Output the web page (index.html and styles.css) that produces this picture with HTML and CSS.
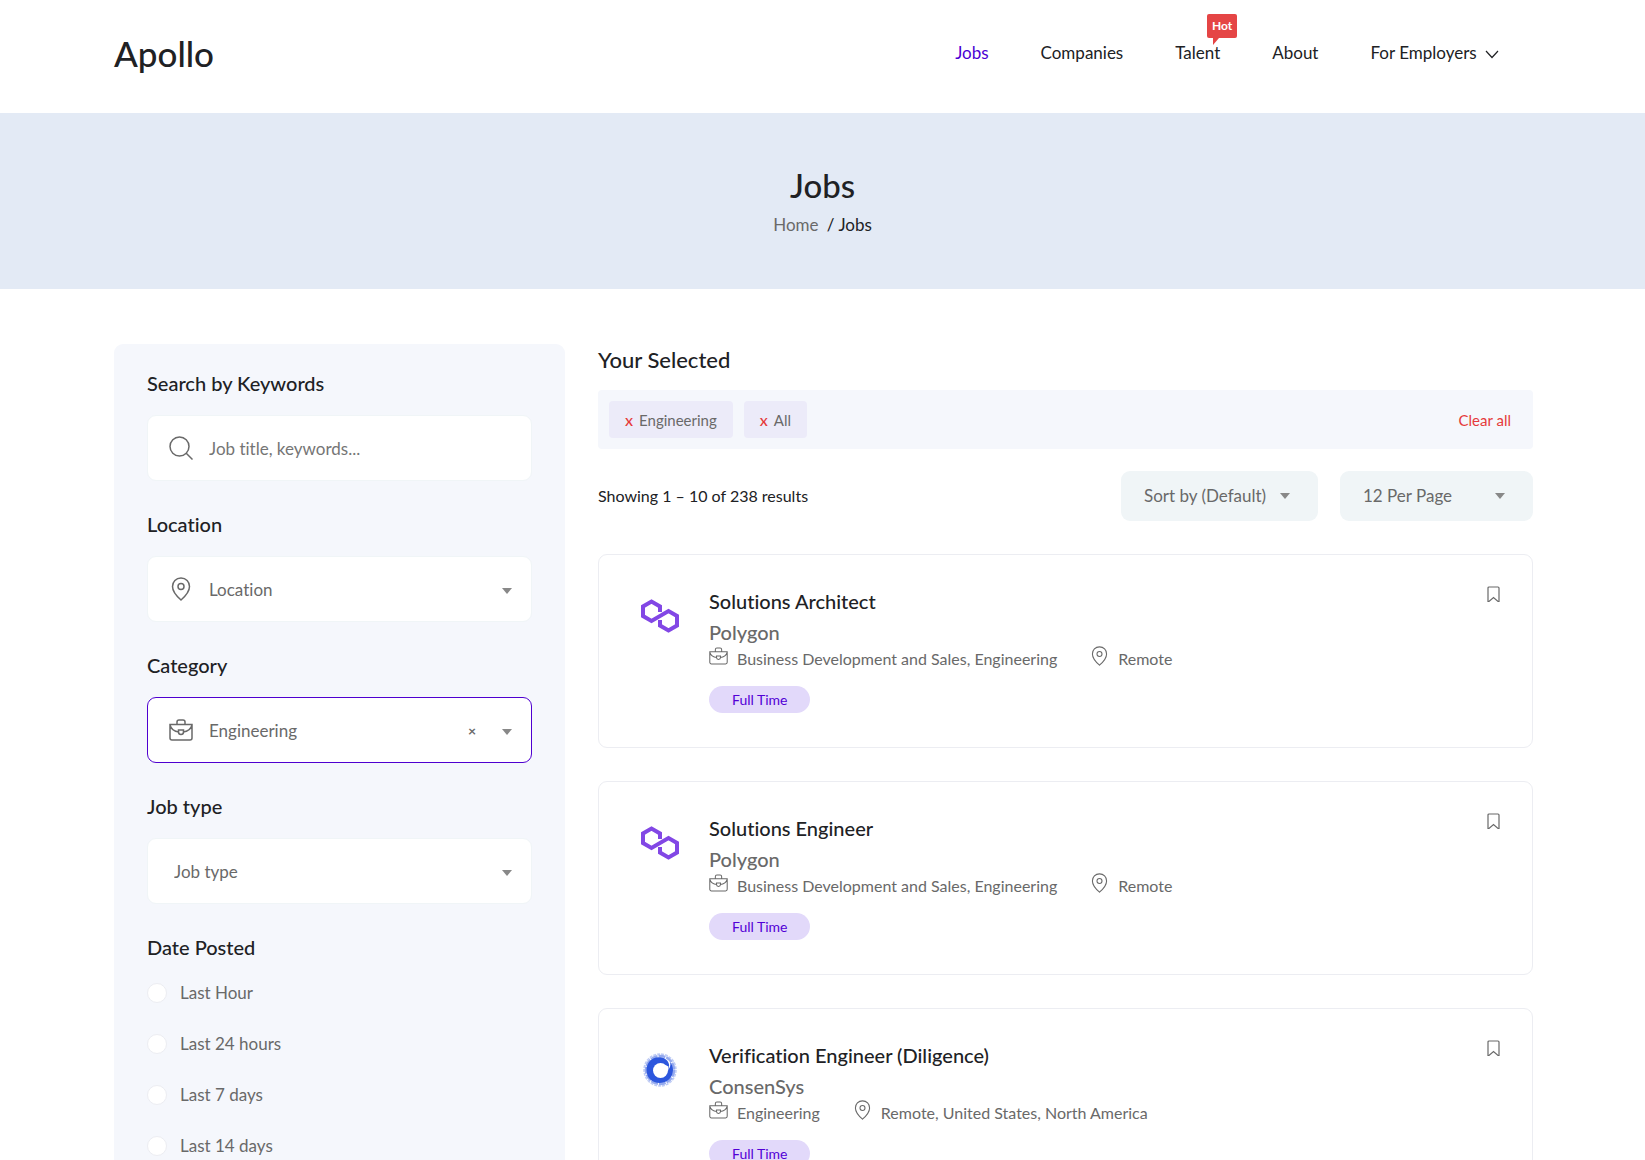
FILE: index.html
```html
<!DOCTYPE html>
<html lang="en">
<head>
    <meta charset="UTF-8">
    <meta name="viewport" content="width=device-width, initial-scale=1.0">
    <title>Jobs - Apollo</title>
    <link rel="stylesheet" href="styles.css">
</head>
<body>
    <!-- Shared icons -->
    <svg class="icon-defs" aria-hidden="true">
        <symbol id="icon-briefcase" viewBox="0 0 24 22">
            <path d="M1 5.500h22v13.500a2 2 0 0 1-2 2H3a2 2 0 0 1-2-2zM8 5.500V3a2 2 0 0 1 2-2h4a2 2 0 0 1 2 2v2.500M1 6c1 4 5 6.500 9 7M23 6c-1 4-5 6.500-9 7"/>
            <path d="M9.500 11h5v2a2.500 2.500 0 0 1-5 0z"/>
        </symbol>
        <symbol id="icon-pin" viewBox="0 0 20 24">
            <path d="M10 1c5 0 8.500 4 8.500 8.500C18.500 15 14 19.500 10 23 6 19.500 1.500 15 1.500 9.500 1.500 5 5 1 10 1z"/>
            <circle cx="10" cy="9.500" r="3"/>
        </symbol>
        <symbol id="icon-bookmark" viewBox="0 0 13 17">
            <path d="M2 1h9a1 1 0 0 1 1 1V15.500h-1l-4.500-4-4.500 4H1V2A1 1 0 0 1 2 1z"/>
        </symbol>
        <symbol id="logo-polygon" viewBox="0 0 38 34">
            <path d="M19 13V7.500L10.500 2.500 2 7.500V17l8.500 5 17-10 8.500 5v9.500l-8.500 5-8.500-5V21"/>
        </symbol>
    </svg>

    <header class="header">
        <div class="container header-inner">
            <a class="brand" href="#">Apollo</a>
            <nav class="nav">
                <a class="active" href="#">Jobs</a>
                <a href="#">Companies</a>
                <a class="talent" href="#">Talent<span class="hot">Hot</span></a>
                <a href="#">About</a>
                <a href="#">For Employers
                    <svg class="chevron" viewBox="0 0 14 9"><path d="M1 1l6 6.500L13 1"/></svg>
                </a>
            </nav>
        </div>
    </header>

    <section class="banner">
        <h1>Jobs</h1>
        <div class="breadcrumb"><a href="#">Home</a> <span>/ Jobs</span></div>
    </section>

    <main class="container content">
        <aside class="sidebar">
            <div class="filter">
                <label for="keywords">Search by Keywords</label>
                <div class="field">
                    <svg class="field-icon" viewBox="0 0 24 24"><circle cx="10.500" cy="10.500" r="9.500"/><path d="M17 17l6.500 6.500"/></svg>
                    <input type="text" id="keywords" placeholder="Job title, keywords...">
                </div>
            </div>
            <div class="filter">
                <label for="location">Location</label>
                <div class="field">
                    <svg class="field-icon"><use href="#icon-pin"/></svg>
                    <select id="location"><option>Location</option></select>
                    <span class="arrow"></span>
                </div>
            </div>
            <div class="filter">
                <label for="category">Category</label>
                <div class="field selected">
                    <svg class="field-icon"><use href="#icon-briefcase"/></svg>
                    <select id="category"><option>Engineering</option></select>
                    <button class="clear" type="button" aria-label="Clear category">×</button>
                    <span class="arrow"></span>
                </div>
            </div>
            <div class="filter">
                <label for="job-type">Job type</label>
                <div class="field no-icon">
                    <select id="job-type"><option>Job type</option></select>
                    <span class="arrow"></span>
                </div>
            </div>
            <fieldset class="dates">
                <legend>Date Posted</legend>
                <label><input type="radio" name="date"> Last Hour</label>
                <label><input type="radio" name="date"> Last 24 hours</label>
                <label><input type="radio" name="date"> Last 7 days</label>
                <label><input type="radio" name="date"> Last 14 days</label>
            </fieldset>
        </aside>

        <section class="results">
            <h2>Your Selected</h2>
            <div class="selection">
                <button class="chip" type="button"><span>x</span>Engineering</button>
                <button class="chip" type="button"><span>x</span>All</button>
                <a class="clear-all" href="#">Clear all</a>
            </div>

            <div class="toolbar">
                <p>Showing 1 – 10 of 238 results</p>
                <div class="sort">
                    <select aria-label="Sort by"><option>Sort by (Default)</option></select>
                    <span class="arrow"></span>
                </div>
                <div class="sort per-page">
                    <select aria-label="Jobs per page"><option>12 Per Page</option></select>
                    <span class="arrow"></span>
                </div>
            </div>

            <article class="job">
                <svg class="logo logo-polygon"><use href="#logo-polygon"/></svg>
                <div class="job-info">
                    <h3><a href="#">Solutions Architect</a></h3>
                    <h4>Polygon</h4>
                    <ul class="meta">
                        <li><svg class="meta-icon"><use href="#icon-briefcase"/></svg>Business Development and Sales, Engineering</li>
                        <li><svg class="meta-icon"><use href="#icon-pin"/></svg>Remote</li>
                    </ul>
                    <a class="type" href="#">Full Time</a>
                </div>
                <button class="bookmark" type="button" aria-label="Save job"><svg><use href="#icon-bookmark"/></svg></button>
            </article>

            <article class="job">
                <svg class="logo logo-polygon"><use href="#logo-polygon"/></svg>
                <div class="job-info">
                    <h3><a href="#">Solutions Engineer</a></h3>
                    <h4>Polygon</h4>
                    <ul class="meta">
                        <li><svg class="meta-icon"><use href="#icon-briefcase"/></svg>Business Development and Sales, Engineering</li>
                        <li><svg class="meta-icon"><use href="#icon-pin"/></svg>Remote</li>
                    </ul>
                    <a class="type" href="#">Full Time</a>
                </div>
                <button class="bookmark" type="button" aria-label="Save job"><svg><use href="#icon-bookmark"/></svg></button>
            </article>

            <article class="job">
                <svg class="logo logo-consensys" viewBox="0 0 38 38">
                    <circle class="halo" cx="19" cy="19" r="16"/>
                    <circle class="spray" cx="19" cy="19" r="14"/>
                    <path class="disc" d="M27 19c3-5 0-11-6-12.500C12 4.500 5.500 11 5.500 19c0 8 6 13 13 13 8 0 13.500-6 13.500-13 0-3-1-6-3-8 1 3 0 6-2 8z"/>
                    <circle class="hole" cx="19.500" cy="19.500" r="7.500"/>
                    <path class="hole" d="M24 14l3.500 1.500-.5 5z"/>
                </svg>
                <div class="job-info">
                    <h3><a href="#">Verification Engineer (Diligence)</a></h3>
                    <h4>ConsenSys</h4>
                    <ul class="meta">
                        <li><svg class="meta-icon"><use href="#icon-briefcase"/></svg>Engineering</li>
                        <li><svg class="meta-icon"><use href="#icon-pin"/></svg>Remote, United States, North America</li>
                    </ul>
                    <a class="type" href="#">Full Time</a>
                </div>
                <button class="bookmark" type="button" aria-label="Save job"><svg><use href="#icon-bookmark"/></svg></button>
            </article>
        </section>
    </main>
</body>
</html>
```
FILE: styles.css
```css
* {
    box-sizing: border-box;
}

body {
    margin: 0;
    font-family: Lato, 'Liberation Sans', sans-serif;
    font-size: 17px;
    line-height: 26px;
    font-variant-ligatures: none;
    color: #696969;
    background-color: #fff;
    height: 100vh;
    overflow-x: hidden;
    scrollbar-width: none;
}

h1, h2, h3, h4, p, ul {
    margin: 0;
    padding: 0;
    font-weight: 500;
}

a {
    color: inherit;
    text-decoration: none;
}

svg {
    fill: none;
    stroke: currentColor;
    stroke-width: 1.5;
}

button, input, select {
    font: inherit;
    color: inherit;
}

button {
    padding: 0;
    border: none;
    background: none;
    cursor: pointer;
}

.icon-defs {
    position: absolute;
    width: 0;
    height: 0;
}

.container {
    padding: 0 112px 0 114px;
}

/* Header */
.header-inner {
    display: flex;
    align-items: center;
    justify-content: space-between;
    height: 113px;
    padding-bottom: 8px;
    color: #202124;
}

.brand {
    font-size: 35px;
    font-weight: 500;
    line-height: 40px;
}

.nav {
    display: flex;
    gap: 52px;
    margin-right: 34px;
}

.nav .active {
    color: #4a00d4;
}

.talent {
    position: relative;
}

.hot {
    position: absolute;
    top: -26px;
    right: -17px;
    padding: 0 5px;
    border-radius: 2px;
    font-size: 12px;
    font-weight: 700;
    line-height: 24px;
    color: #fff;
    background-color: #e54545;
}

.hot::after {
    content: "";
    position: absolute;
    top: 24px;
    left: 6px;
    border-top: 7px solid #e54545;
    border-right: 6px solid transparent;
}

.chevron {
    width: 14px;
    height: 9px;
    margin-left: 4px;
    stroke-width: 1.2;
}

/* Page title */
.banner {
    padding: 50px 0 46px;
    text-align: center;
    color: #202124;
    background-color: #e3eaf5;
}

.banner h1 {
    font-size: 33px;
    line-height: 44px;
}

.breadcrumb {
    line-height: 36px;
}

.breadcrumb a {
    margin-right: 4px;
    color: #696969;
}

.content {
    display: grid;
    grid-template-columns: 451fr 935fr;
    gap: 33px;
    padding-top: 55px;
}

/* Filters */
.sidebar {
    padding: 26px 33px;
    border-radius: 9px;
    background-color: #f5f7fc;
}

.filter {
    margin-bottom: 30px;
}

.filter > label, .dates legend {
    display: block;
    margin-bottom: 19px;
    padding: 0;
    font-size: 20px;
    font-weight: 500;
    color: #202124;
}

.field {
    display: flex;
    align-items: center;
    height: 66px;
    padding: 0 19px 0 21px;
    border: 1px solid #f0f5f7;
    border-radius: 9px;
    background-color: #fff;
}

.field.selected {
    border-color: #4f00d0;
}

.field.no-icon {
    padding-left: 26px;
}

.field-icon {
    flex: none;
    width: 24px;
    height: 24px;
    margin-right: 16px;
}

.field input, .field select {
    flex: 1;
    min-width: 0;
    padding: 2px 0 0;
    border: none;
    outline: none;
    background: none;
    appearance: none;
}

.field input::placeholder {
    color: #757575;
    opacity: 1;
}

.arrow {
    border-top: 6px solid #888;
    border-left: 5px solid transparent;
    border-right: 5px solid transparent;
}

.field .arrow {
    margin-top: 4px;
}

.clear {
    margin: 2px 26px 0 0;
    font-size: 14px;
    font-weight: 700;
}

.dates {
    margin: 0;
    padding: 0;
    border: none;
}

.dates legend {
    margin-bottom: 20px;
}

.dates label {
    display: flex;
    align-items: center;
    gap: 13px;
    margin-bottom: 25px;
}

.dates input {
    width: 20px;
    height: 20px;
    margin: 0;
    border: 1px solid #ecedf2;
    border-radius: 50%;
    background-color: #fff;
    appearance: none;
}

/* Results */
.results h2 {
    margin: 3px 0 17px;
    font-size: 22px;
    color: #202124;
}

.selection {
    display: flex;
    align-items: center;
    gap: 11px;
    padding: 11px 22px 11px 11px;
    border-radius: 4px;
    font-size: 15px;
    background-color: #f5f7fc;
}

.chip {
    height: 37px;
    padding: 0 16px;
    border-radius: 4px;
    background-color: #ecebf9;
}

.chip span {
    margin-right: 6px;
    font-size: 16px;
    font-weight: 500;
    color: #e53a3a;
}

.clear-all {
    margin-left: auto;
    color: #e53a3a;
}

.toolbar {
    display: flex;
    align-items: center;
    gap: 22px;
    margin: 22px 0 33px;
}

.toolbar p {
    flex: 1;
    font-size: 16px;
    font-weight: 400;
    color: #202124;
}

.sort {
    display: flex;
    align-items: center;
    width: 197px;
    height: 50px;
    padding: 0 28px 0 23px;
    border-radius: 9px;
    background-color: #f0f5f7;
}

.per-page {
    width: 193px;
}

.sort select {
    flex: 1;
    min-width: 0;
    padding: 0;
    border: none;
    background: none;
    appearance: none;
}

.job {
    display: flex;
    align-items: flex-start;
    margin-bottom: 33px;
    padding: 32px 33px 34px;
    border: 1px solid #ecedf2;
    border-radius: 9px;
}

.logo {
    flex: none;
    width: 38px;
    height: 34px;
    margin: 12px 30px 0 9px;
}

.logo-polygon {
    color: #8247e5;
    stroke-width: 4;
}

.logo-consensys {
    height: 38px;
    margin-top: 10px;
    color: #2c56dd;
}

.halo {
    stroke-width: 1.5;
    stroke-dasharray: 3 1;
    opacity: 0.3;
}

.spray {
    stroke-width: 2.5;
    stroke-dasharray: 7 1;
    opacity: 0.5;
}

.disc {
    fill: #2c56dd;
    stroke: none;
}

.hole {
    fill: #fff;
    stroke: none;
}

.job-info {
    flex: 1;
}

.job h3, .job h4 {
    font-size: 20px;
}

.job h3 {
    line-height: 28px;
    color: #202124;
}

.job h4 {
    line-height: 34px;
}

.meta {
    display: flex;
    gap: 33px;
    margin: -3px 0 16px;
    font-size: 16px;
    font-weight: 400;
    line-height: 21px;
    list-style: none;
}

.meta li {
    display: flex;
    align-items: center;
    gap: 9px;
}

.meta-icon {
    width: 19px;
    height: 20px;
    margin-bottom: 4px;
    stroke-width: 1.3;
}

.type {
    display: inline-block;
    padding: 0 23px;
    border-radius: 14px;
    font-size: 14px;
    line-height: 27px;
    color: #5200d6;
    background-color: #e2d9fa;
}

.bookmark {
    margin-right: -1px;
    line-height: 0;
}

.bookmark svg {
    width: 13px;
    height: 17px;
    margin-top: -1px;
    stroke-width: 1.2;
}
```
